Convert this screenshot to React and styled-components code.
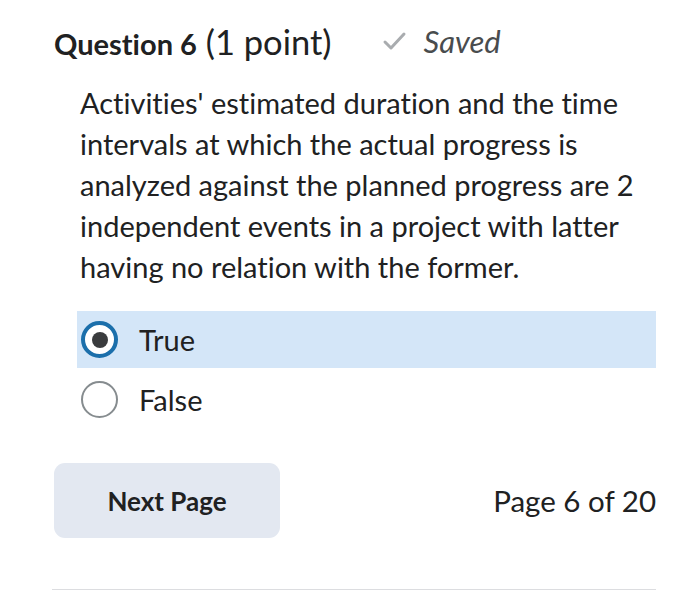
import styled, { createGlobalStyle } from 'styled-components';

const Global = createGlobalStyle`
    body {
        margin: 0;
        background: #fff;
        font-family: Lato, "Noto Sans", sans-serif;
        font-variant-ligatures: none;
        color: #202122;
    }
`;

const Page = styled.div`
    width: 700px;
    height: 592px;
    box-sizing: border-box;
    padding: 21px 44px 0 54px;
    overflow: hidden;
`;

const Header = styled.div`
    display: flex;
    align-items: center;
    gap: 50px;
    height: 40px;
`;

const Title = styled.h2`
    margin: 0;
    font-size: 34.5px;
    font-weight: 400;
    color: #202122;
    white-space: nowrap;
`;

const Bold = styled.span`
    font-size: 29px;
    font-weight: 700;
`;

const Saved = styled.span`
    display: flex;
    align-items: center;
    gap: 17px;
    font-size: 31px;
    font-style: italic;
    color: #494c4e;
`;

const Body = styled.div`
    padding-left: 23px;
`;

const QuestionText = styled.p`
    margin: 21px 0 0 3px;
    font-size: 29px;
    line-height: 41px;
    color: #202122;
`;

const Options = styled.div`
    margin-top: 24px;
    display: flex;
    flex-direction: column;
    gap: 3px;
`;

const Option = styled.label`
    display: flex;
    align-items: center;
    gap: 21px;
    height: 57px;
    padding-left: 4px;
    background: ${(p) => (p.$selected ? '#d4e6f8' : 'transparent')};
    font-size: 29px;
    color: #202122;
`;

const Radio = styled.span`
    width: 37px;
    height: 37px;
    box-sizing: border-box;
    border-radius: 50%;
    border: ${(p) => (p.$checked ? '4px solid #1b6fab' : '2px solid #868c8f')};
    background: #fff;
    display: flex;
    align-items: center;
    justify-content: center;

    &::after {
        content: '';
        display: ${(p) => (p.$checked ? 'block' : 'none')};
        width: 16px;
        height: 16px;
        border-radius: 50%;
        background: #3a3c3e;
    }
`;

const Footer = styled.div`
    margin-top: 35px;
    display: flex;
    align-items: center;
    justify-content: space-between;
`;

const NextBtn = styled.button`
    width: 226px;
    height: 75px;
    border: none;
    border-radius: 11px;
    background: #e3e8f1;
    font-family: inherit;
    font-size: 26px;
    font-weight: 700;
    color: #202122;
`;

const PageCount = styled.span`
    font-size: 29.5px;
    color: #202122;
`;

const Divider = styled.hr`
    margin: 51px 0 0 -2px;
    border: none;
    border-top: 1px solid #dcdde0;
`;

export default function App() {
    return (
        <Page>
            <Global />
            <Header>
                <Title>
                    <Bold>Question 6</Bold> (1 point)
                </Title>
                <Saved>
                    <svg width="25" height="20" viewBox="0 0 25 20">
                        <path d="M3 11 L9 17 L22 3" fill="none" stroke="#a9acaf" strokeWidth="3" strokeLinecap="round" strokeLinejoin="round" />
                    </svg>
                    Saved
                </Saved>
            </Header>
            <Body>
                <QuestionText>
                    Activities' estimated duration and the time intervals at which the actual progress is analyzed against the planned progress are 2 independent events in a project with latter having no relation with the former.
                </QuestionText>
                <Options>
                    <Option $selected>
                        <Radio $checked />
                        True
                    </Option>
                    <Option>
                        <Radio />
                        False
                    </Option>
                </Options>
            </Body>
            <Footer>
                <NextBtn>Next Page</NextBtn>
                <PageCount>Page 6 of 20</PageCount>
            </Footer>
            <Divider />
        </Page>
    );
}
